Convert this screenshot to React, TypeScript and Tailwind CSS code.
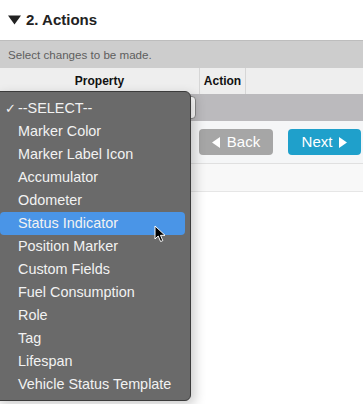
const options = [
  "--SELECT--",
  "Marker Color",
  "Marker Label Icon",
  "Accumulator",
  "Odometer",
  "Status Indicator",
  "Position Marker",
  "Custom Fields",
  "Fuel Consumption",
  "Role",
  "Tag",
  "Lifespan",
  "Vehicle Status Template",
];

export default function App() {
  return (
    <div className="relative w-[363px] h-[404px] overflow-hidden bg-white font-['Liberation_Sans',Arial,sans-serif]">
      {/* section header */}
      <div className="h-[40px] flex items-center pl-[8px] gap-[5px] text-[15px] font-bold text-[#222]">
        <svg width="13" height="10" viewBox="0 0 13 10">
          <path d="M0 0.5 H13 L6.5 9.5 Z" fill="#222" />
        </svg>
        <span>2. Actions</span>
      </div>
      <div className="h-[28px] bg-[#cdcdcd] border-t border-[#bdbdbd] flex items-center px-2 text-[11.6px] text-[#5e5e5e]">
        Select changes to be made.
      </div>

      {/* table */}
      <div className="flex h-[26px] bg-[#eeeeee] text-[12px] font-bold text-[#111]">
        <div className="w-[200px] flex items-center justify-center border-r border-[#d6d6d6]">Property</div>
        <div className="w-[46px] flex items-center justify-center border-r border-[#d6d6d6]">Action</div>
        <div className="flex-1" />
      </div>
      <div className="h-[27px] bg-[#bbbabd] flex items-center">
        <div className="ml-[150px] w-[46px] h-[23px] bg-white border border-[#8a8a8a] rounded-sm" />
      </div>

      <div className="h-[43px] bg-[#f5f6f7] border-b border-[#e0e0e0] flex items-center gap-[15px] pl-[199px]">
        <button className="w-[74px] h-[26px] rounded bg-[#a6a6a6] text-white text-[15px] flex items-center justify-center gap-[7px]">
          <svg width="8" height="11" viewBox="0 0 8 11">
            <path d="M8 0 V11 L0 5.5 Z" fill="#fff" />
          </svg>
          <span>Back</span>
        </button>
        <button className="w-[73px] h-[26px] rounded bg-[#1fa0cb] text-white text-[15px] flex items-center justify-center gap-[7px]">
          <span>Next</span>
          <svg width="8" height="11" viewBox="0 0 8 11">
            <path d="M0 0 V11 L8 5.5 Z" fill="#fff" />
          </svg>
        </button>
      </div>
      <div className="h-[28px] bg-[#f8f8f8] border-b border-[#e6e6e6]" />

      {/* open select menu */}
      <div className="absolute left-[-6px] top-[91px] w-[197px] h-[310px] rounded-[6px] bg-[#6a6a6a] border border-[#3b3b3b] shadow-[4px_4px_12px_rgba(0,0,0,0.2)] py-[5px] px-[5px]">
        {options.map((o, i) => (
          <div
            key={o}
            className={
              "h-[23px] flex items-center rounded-[4px] text-[14.4px] text-[#f2f2f2] " +
              (i === 5 ? "bg-[#4a95e7]" : "")
            }
          >
            <span className="w-[18px] pl-[5px] text-[13px] font-['DejaVu_Sans',sans-serif]">
              {i === 0 ? "✓" : ""}
            </span>
            <span>{o}</span>
          </div>
        ))}
      </div>

      {/* mouse cursor */}
      <svg className="absolute left-[154px] top-[225px]" width="13" height="18" viewBox="0 0 13 18">
        <path d="M1 1 L1 14 L4.2 11 L6.6 16.5 L8.8 15.6 L6.5 10.3 L11 10.3 Z" fill="#000" stroke="#fff" strokeWidth="1" strokeLinejoin="round" />
      </svg>
    </div>
  );
}
